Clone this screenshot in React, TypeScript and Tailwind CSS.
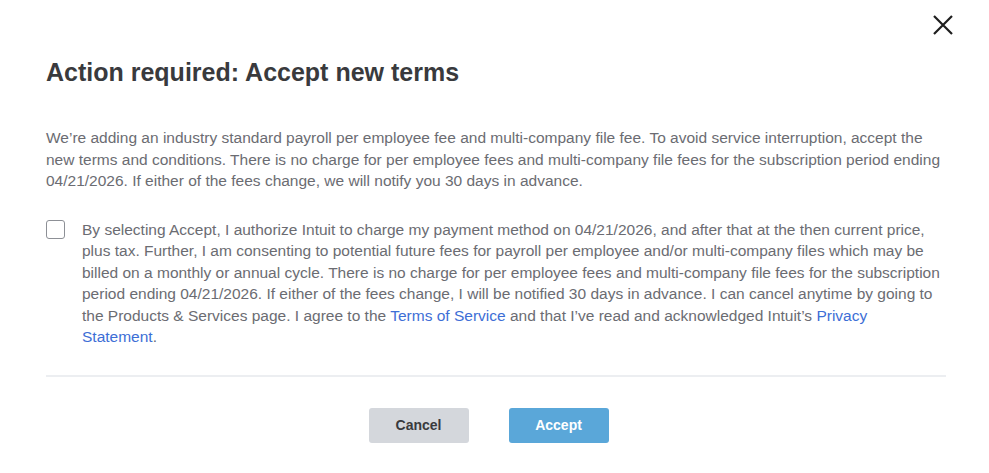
import { useState } from "react";

export default function App() {
  const [checked, setChecked] = useState(false);

  return (
    <div className="relative w-full h-[473px] bg-white font-['Liberation_Sans',Arial,sans-serif]">
      {/* Close */}
      <button className="absolute right-[35px] top-[14px] w-[22px] h-[22px] text-[#1e1e1e]" aria-label="Close">
        <svg viewBox="0 0 22 22" className="w-[22px] h-[22px]" fill="none" stroke="currentColor" strokeWidth="2.2">
          <path d="M2 2 L20 20 M20 2 L2 20" />
        </svg>
      </button>

      <div className="px-[46px] pr-[43px] pt-[57px]">
        <h1 className="text-[25px] leading-[30px] font-bold text-[#393a3d]">Action required: Accept new terms</h1>

        <p className="mt-[40px] text-[15.5px] leading-[21.5px] text-[#6b6c72]">
          We’re adding an industry standard payroll per employee fee and multi-company file fee. To avoid service interruption, accept the new terms and conditions. There is no charge for per employee fees and multi-company file fees for the subscription period ending 04/21/2026. If either of the fees change, we will notify you 30 days in advance.
        </p>

        <div className="mt-[27px] flex items-start">
          <button
            onClick={() => setChecked(!checked)}
            className="mt-[1px] w-[19px] h-[19px] shrink-0 rounded-[3px] border border-[#8d9096] bg-white"
            aria-label="Accept terms"
          />
          <p className="ml-[17px] text-[15.5px] leading-[21.5px] text-[#6b6c72]">
            By selecting Accept, I authorize Intuit to charge my payment method on 04/21/2026, and after that at the then current price, plus tax. Further, I am consenting to potential future fees for payroll per employee and/or multi-company files which may be billed on a monthly or annual cycle. There is no charge for per employee fees and multi-company file fees for the subscription period ending 04/21/2026. If either of the fees change, I will be notified 30 days in advance. I can cancel anytime by going to the Products &amp; Services page. I agree to the <a className="text-[#3d6ed6]">Terms of Service</a> and that I’ve read and acknowledged Intuit’s <a className="text-[#3d6ed6]">Privacy Statement</a>.
          </p>
        </div>

        <div className="mt-[27px] h-[2px] bg-[#eceef1]" />

        <div className="mt-[31px] flex justify-center gap-[40px] pr-[15px]">
          <button className="w-[100px] h-[35px] rounded-[3px] bg-[#d4d7dc] text-[14px] font-bold text-[#393a3d]">Cancel</button>
          <button className="w-[100px] h-[35px] rounded-[3px] bg-[#5aa7d9] text-[14px] font-bold text-white">Accept</button>
        </div>
      </div>
    </div>
  );
}
